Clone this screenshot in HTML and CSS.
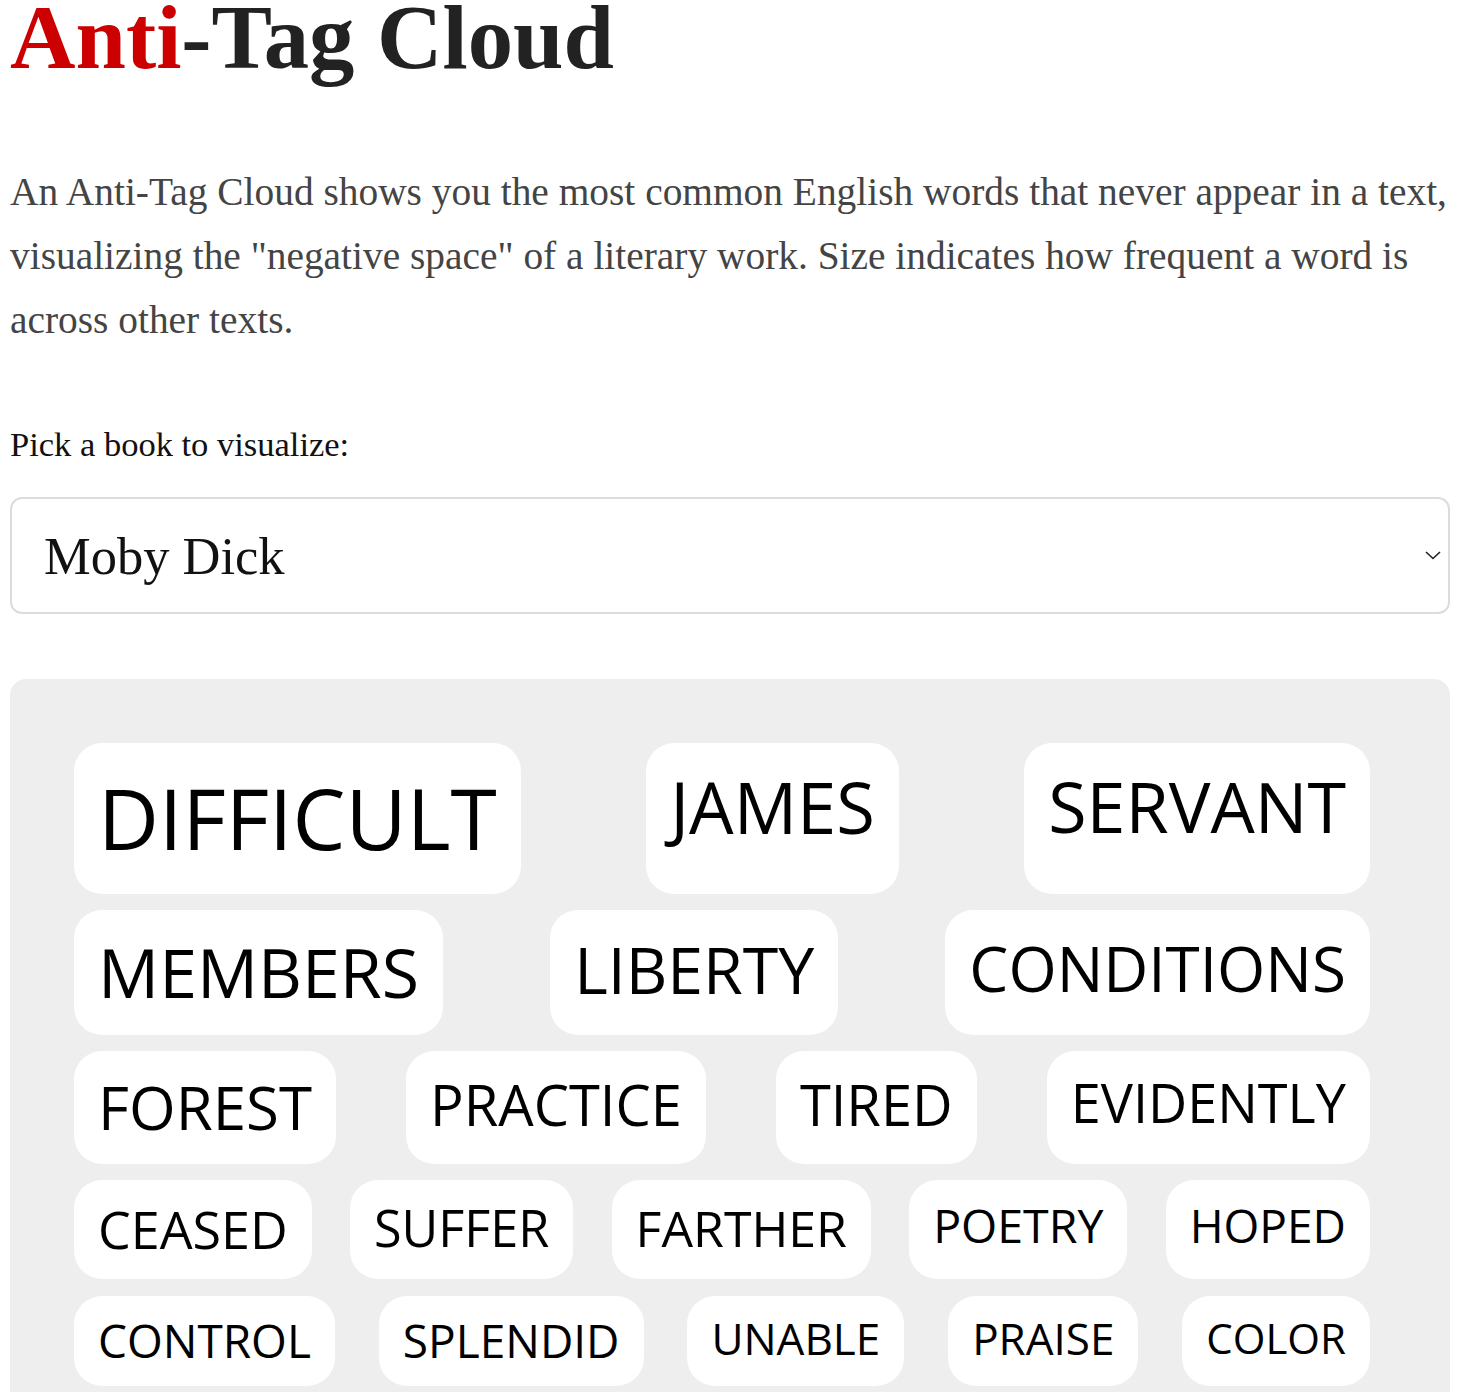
FILE: index.html
```html
<!DOCTYPE html>
<html lang="en">
<head>
<meta charset="utf-8">
<title>Anti-Tag Cloud</title>
<link rel="stylesheet" href="styles.css">
</head>
<body>
<main class="page">
  <h1 class="title"><span class="accent">Anti</span>-Tag Cloud</h1>
  <p class="intro">An Anti-Tag Cloud shows you the most common English words that never appear in a text, visualizing the "negative space" of a literary work. Size indicates how frequent a word is across other texts.</p>
  <label class="pick-label" for="book">Pick a book to visualize:</label>
  <div class="select-wrap">
    <select id="book" class="book-select">
      <option>Moby Dick</option>
    </select>
    <svg class="chevron" width="18" height="12" viewBox="0 0 18 12" aria-hidden="true"><polyline points="2,3 9,9.5 16,3" fill="none" stroke="#222" stroke-width="1.6"/></svg>
  </div>
  <section class="cloud">
    <div class="row">
      <span class="tag" style="font-size:84px">DIFFICULT</span>
      <span class="tag" style="font-size:70.5px">JAMES</span>
      <span class="tag" style="font-size:70px">SERVANT</span>
    </div>
    <div class="row">
      <span class="tag" style="font-size:68px">MEMBERS</span>
      <span class="tag" style="font-size:64.4px">LIBERTY</span>
      <span class="tag" style="font-size:62px">CONDITIONS</span>
    </div>
    <div class="row">
      <span class="tag" style="font-size:60px">FOREST</span>
      <span class="tag" style="font-size:56px">PRACTICE</span>
      <span class="tag" style="font-size:56px">TIRED</span>
      <span class="tag" style="font-size:54px">EVIDENTLY</span>
    </div>
    <div class="row">
      <span class="tag" style="font-size:52px">CEASED</span>
      <span class="tag" style="font-size:50.4px">SUFFER</span>
      <span class="tag" style="font-size:50px">FARTHER</span>
      <span class="tag" style="font-size:46.5px">POETRY</span>
      <span class="tag" style="font-size:46px">HOPED</span>
    </div>
    <div class="row">
      <span class="tag" style="font-size:46px">CONTROL</span>
      <span class="tag" style="font-size:46px">SPLENDID</span>
      <span class="tag" style="font-size:44px">UNABLE</span>
      <span class="tag" style="font-size:44px">PRAISE</span>
      <span class="tag" style="font-size:42px">COLOR</span>
    </div>
  </section>
</main>
</body>
</html>
```
FILE: styles.css
```css
html, body {
  margin: 0;
  padding: 0;
  background: #fff;
}

body {
  font-family: "Liberation Serif", "Times New Roman", serif;
  color: #222;
}

.page {
  padding: 0 10px;
  width: 1440px;
}

.title {
  margin: 0;
  font-size: 90.7px;
  line-height: 76px;
  font-weight: bold;
  color: #222;
}

.accent {
  color: #cc0000;
}

.intro {
  margin: 84px 0 0;
  font-size: 39.4px;
  line-height: 64px;
  color: #444;
}

.pick-label {
  display: block;
  margin-top: 72px;
  font-size: 34.5px;
  line-height: 40px;
  color: #111;
}

.select-wrap {
  position: relative;
  margin-top: 33px;
}

.book-select {
  display: block;
  width: 100%;
  height: 117px;
  box-sizing: border-box;
  margin: 0;
  padding: 0 60px 0 32px;
  border: 2px solid #dcdcdc;
  border-radius: 12px;
  background: #fff;
  font-family: "Liberation Serif", "Times New Roman", serif;
  font-size: 52.5px;
  color: #111;
  -webkit-appearance: none;
  appearance: none;
  outline: none;
}

.chevron {
  position: absolute;
  right: 8px;
  top: 52px;
  pointer-events: none;
}

.cloud {
  margin-top: 65px;
  background: #eeeeee;
  border-radius: 16px;
  padding: 64px 80px 64px 64px;
  display: flex;
  flex-direction: column;
  gap: 16.5px;
}

.row {
  display: flex;
  justify-content: space-between;
  align-items: stretch;
}

.tag {
  display: block;
  background: #fff;
  border-radius: 28px;
  padding: calc(0.12em + 8px) 24px;
  font-family: "Open Sans", "Noto Sans", sans-serif;
  line-height: 1.362;
  color: #000;
  white-space: nowrap;
}
```
